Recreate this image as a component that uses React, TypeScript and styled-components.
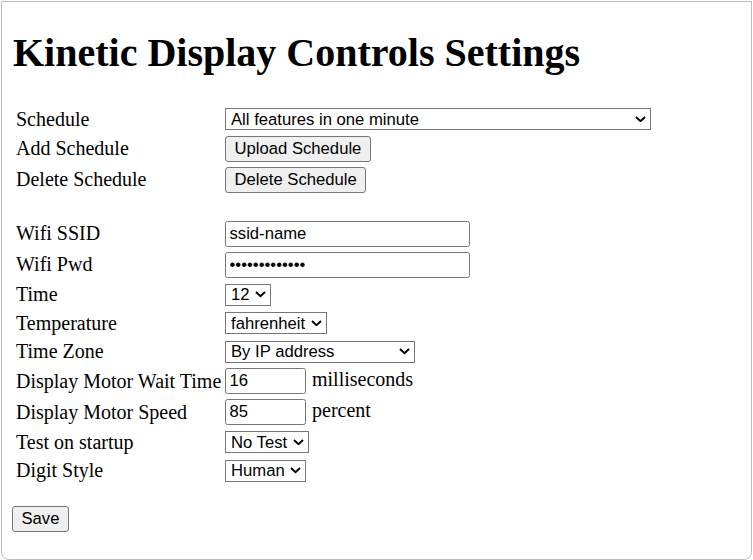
import React from "react";
import styled, { createGlobalStyle } from "styled-components";

const GlobalStyle = createGlobalStyle`
  html, body { margin: 0; padding: 0; background: #ffffff; }
  body { width: 753px; height: 560px; overflow: hidden; }
`;

const Frame = styled.div`
  box-sizing: border-box;
  width: 751px;
  height: 559px;
  margin: 1px 0 0 1px;
  border: 1px solid #bdbdbd;
  border-radius: 0 0 8px 8px;
  padding: 0 10px;
  background: #ffffff;
  font-family: "Liberation Serif", "Times New Roman", serif;
  color: #000000;
  overflow: hidden;
`;

const Title = styled.h1`
  font-size: 40px;
  font-weight: bold;
  line-height: 46px;
  margin: 27.5px 0 30.5px 1px;
`;

const Form = styled.div`
  display: flex;
  flex-direction: column;
  gap: 2.5px;
  padding-left: 4px;
`;

type RowKind = "select" | "control" | "blank";
const rowHeights: Record<RowKind, number> = { select: 26, control: 28.5, blank: 20.5 };

const Row = styled.div<{ $kind: RowKind }>`
  display: grid;
  grid-template-columns: 209px 1fr;
  align-items: center;
  height: ${(p) => rowHeights[p.$kind]}px;
`;

const Label = styled.div`
  font-size: 20px;
  line-height: 23px;
  white-space: nowrap;
`;

const Field = styled.div`
  display: flex;
  align-items: baseline;
  gap: 6px;
`;

const Unit = styled.span`
  font-size: 20px;
  line-height: 23px;
`;

const controlFont = `
  font-family: "Liberation Sans", Arial, sans-serif;
  font-size: 16.67px;
  color: #000000;
  margin: 0;
  box-sizing: border-box;
`;

const SelectWrap = styled.span<{ $w: number }>`
  position: relative;
  display: inline-block;
  width: ${(p) => p.$w}px;
`;

const NativeSelect = styled.select`
  ${controlFont}
  appearance: none;
  -webkit-appearance: none;
  display: block;
  width: 100%;
  height: 22px;
  border: 1px solid #767676;
  border-radius: 0;
  background: #ffffff;
  padding: 0 20px 0 5px;
  outline: none;
`;

const Chevron = styled.svg`
  position: absolute;
  right: 5px;
  top: 7.5px;
  width: 11px;
  height: 6.5px;
  pointer-events: none;
`;

const Button = styled.button`
  ${controlFont}
  height: 26px;
  padding: 0 8.5px;
  border: 1px solid #767676;
  border-radius: 3px;
  background: #efefef;
  white-space: nowrap;
`;

const TextInput = styled.input<{ $w: number }>`
  ${controlFont}
  width: ${(p) => p.$w}px;
  height: 26px;
  padding: 0 3.5px;
  border: 1px solid #767676;
  border-radius: 2.5px;
  background: #ffffff;
  outline: none;
`;

const Footer = styled.div`
  margin-top: 22.5px;
`;

function Select({ width, options }: { width: number; options: string[] }) {
  return (
    <SelectWrap $w={width}>
      <NativeSelect defaultValue={options[0]}>
        {options.map((o) => (
          <option key={o} value={o}>
            {o}
          </option>
        ))}
      </NativeSelect>
      <Chevron viewBox="0 0 11 6.5">
        <path d="M1 1 L5.5 5.2 L10 1" fill="none" stroke="#000" strokeWidth="1.9" />
      </Chevron>
    </SelectWrap>
  );
}

export default function App() {
  return (
    <>
      <GlobalStyle />
      <Frame>
        <Title>Kinetic Display Controls Settings</Title>
        <Form>
          <Row $kind="select">
            <Label>Schedule</Label>
            <Field>
              <Select width={426} options={["All features in one minute"]} />
            </Field>
          </Row>
          <Row $kind="control">
            <Label>Add Schedule</Label>
            <Field>
              <Button>Upload Schedule</Button>
            </Field>
          </Row>
          <Row $kind="control">
            <Label>Delete Schedule</Label>
            <Field>
              <Button>Delete Schedule</Button>
            </Field>
          </Row>
          <Row $kind="blank" />
          <Row $kind="control">
            <Label>Wifi SSID</Label>
            <Field>
              <TextInput $w={245} type="text" defaultValue="ssid-name" />
            </Field>
          </Row>
          <Row $kind="control">
            <Label>Wifi Pwd</Label>
            <Field>
              <TextInput $w={245} type="password" defaultValue="passwordpass1" />
            </Field>
          </Row>
          <Row $kind="select">
            <Label>Time</Label>
            <Field>
              <Select width={46} options={["12", "24"]} />
            </Field>
          </Row>
          <Row $kind="select">
            <Label>Temperature</Label>
            <Field>
              <Select width={102} options={["fahrenheit", "celsius"]} />
            </Field>
          </Row>
          <Row $kind="select">
            <Label>Time Zone</Label>
            <Field>
              <Select width={190} options={["By IP address"]} />
            </Field>
          </Row>
          <Row $kind="control">
            <Label>Display Motor Wait Time</Label>
            <Field>
              <TextInput $w={81} type="text" defaultValue="16" />
              <Unit>milliseconds</Unit>
            </Field>
          </Row>
          <Row $kind="control">
            <Label>Display Motor Speed</Label>
            <Field>
              <TextInput $w={81} type="text" defaultValue="85" />
              <Unit>percent</Unit>
            </Field>
          </Row>
          <Row $kind="select">
            <Label>Test on startup</Label>
            <Field>
              <Select width={84} options={["No Test"]} />
            </Field>
          </Row>
          <Row $kind="select">
            <Label>Digit Style</Label>
            <Field>
              <Select width={81} options={["Human"]} />
            </Field>
          </Row>
        </Form>
        <Footer>
          <Button>Save</Button>
        </Footer>
      </Frame>
    </>
  );
}
